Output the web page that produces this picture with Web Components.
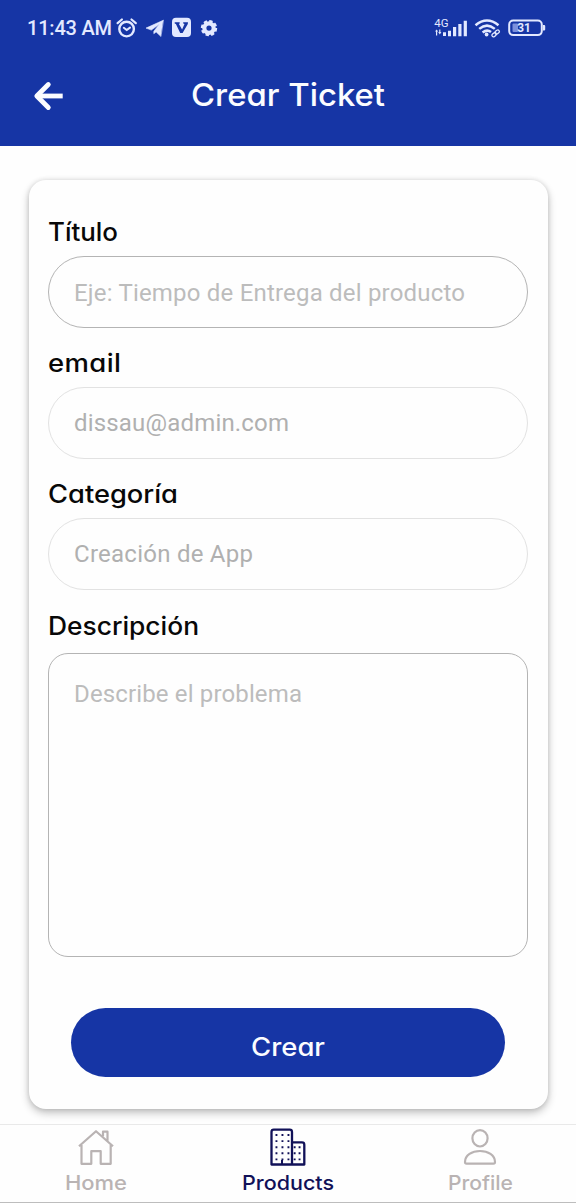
<!DOCTYPE html>
<html lang="es">
<head>
<meta charset="utf-8">
<title>Crear Ticket</title>
<style>
html,body{margin:0;height:100%;background:#fefefe;overflow:hidden}
</style>
</head>
<body>
<ticket-app></ticket-app>
<script>
const define = (name, html, ready) => customElements.define(name, class extends HTMLElement {
  constructor(){
    super();
    const t = document.createElement('template');
    t.innerHTML = html;
    this.attachShadow({mode:'open'}).append(t.content.cloneNode(true));
  }
  connectedCallback(){ if (ready) ready(this, this.shadowRoot); }
});

// Text fitted to the given advance width: "wide" text is first extended
// slightly, and tracking takes up the rest.
define('tracked-text', `<style>
:host{display:block;white-space:nowrap}
span{display:block;width:max-content;transform-origin:0 50%}
</style><span><slot></slot></span>`, (el, root) => {
  const span = root.querySelector('span');
  const n = el.textContent.length;
  const want = +el.getAttribute('width');
  const natural = span.getBoundingClientRect().width;
  const scale = el.hasAttribute('wide') ? Math.max(1, Math.min(1.1, want / natural)) : 1;
  span.style.letterSpacing = (want / scale - natural) / (n - 1) + 'px';
  if (scale > 1) span.style.transform = `scaleX(${scale})`;
  el.style.width = want + 'px';
});

define('status-bar', `<style>
:host{display:flex;height:54px;align-items:center;justify-content:space-between;padding:1px 30px 0 27px;box-sizing:border-box;color:#e3e9ff;font:500 20px/24px Roboto,sans-serif}
.l,.r{display:flex;align-items:center}
svg{display:block;flex:none}
</style>
<div class="l"><tracked-text width="85">11:43 AM</tracked-text>
<svg style="margin-left:4px" width="102" height="24" viewBox="116 15.500 102 24" fill="none" stroke="#e3e9ff" stroke-linecap="round">
<circle cx="126.600" cy="28.600" r="7.300" stroke-width="2.400"/><path d="M117.600 22.700l4.300-3.700M135.800 22.700l-4.300-3.700" stroke-width="2.200"/><path d="M123.800 27.300l2.900 2.300 3.300-2.500" stroke-width="2"/>
<path d="M163.200 19.800L146 27.600l5.300 2 8-5.800-5.500 7v2.400l2.300-1.800 4.600 4.400z" fill="#e3e9ff" stroke="#e3e9ff" stroke-width=".6" stroke-linejoin="round"/>
<rect x="172" y="17.300" width="19" height="19.200" rx="4" fill="#e3e9ff" stroke="none"/><path d="M174.700 21.700h5v1.400l-.8.500 3.200 5.300 2.400-5.300-1.300-.5v-1.400h4.800l-.2 1.800-5.200 9h-2.400l-4.300-9-1.200-.5z" fill="#1635a5" stroke="none"/>
<circle cx="209" cy="27.600" r="4.700" stroke-width="4.200"/><circle cx="209" cy="27.600" r="6.900" stroke-width="2.600" stroke-linecap="butt" stroke-dasharray="3.300 2.119"/>
</svg></div>
<div class="r"><svg width="113" height="24" viewBox="433 15.500 113 24" fill="#e3e9ff">
<text x="434.300" y="26.400" font-family="Roboto" font-size="11.500" font-weight="400" textLength="14.300" lengthAdjust="spacingAndGlyphs">4G</text>
<path d="M435 31l1.600-2 1.600 2h-1v4h-1.200v-4zM438.200 31.500h1v-2.500h1.200v2.500h1l-1.600 2.500zM443 31.800h3v3.700h-3zM448 30.200h3v5.500h-3zM453 26.500h3.200v9.300H453zM458.300 23.500h3.200v12.300h-3.200zM463.700 20.300h3.200v15.500h-3.200z"/>
<g fill="none" stroke="#e3e9ff" stroke-width="2.500"><path d="M475.500 24.700q11.500-9.400 23 0M479.200 28.400q7.800-6.600 15.600 0M482.600 32q4.400-3.500 8.400-.4"/><g stroke-width="1.300"><rect x="491.600" y="32.600" width="4.800" height="3.200" rx="1.600" transform="rotate(-38 494 34)"/><rect x="494.800" y="30.100" width="4.800" height="3.200" rx="1.600" transform="rotate(-38 497 31.700)"/></g></g><circle cx="486.600" cy="34" r="1.900"/>
<rect x="509.200" y="20" width="32.600" height="14.600" rx="4" fill="none" stroke="#e3e9ff" stroke-width="2"/><rect x="512.500" y="23" width="5.500" height="8.600" rx="1" fill="#7c90dc"/><path d="M543 24.500h1.200q1 0 1 1v3.600q0 1-1 1H543z"/>
<text x="517.300" y="31.600" font-family="Roboto" font-size="12.300" font-weight="700" textLength="13.600" lengthAdjust="spacingAndGlyphs">31</text>
</svg></div>`);

define('app-header', `<style>
:host{display:block;height:146.300px;background:#1635a5;flex:none}
.bar{display:grid;grid-template-columns:1fr auto 1fr;height:84px;align-items:center;color:#fbfcff;font:500 31.500px/40px Inter,sans-serif;font-feature-settings:"cv11"}
svg{margin-left:33px;display:block}
::slotted(*){margin-top:-2px}
</style><status-bar></status-bar>
<div class="bar"><svg width="31" height="30" viewBox="33 81 31 30" fill="none" stroke="#fbfcff" stroke-width="4.800" stroke-linecap="round" stroke-linejoin="round"><path d="M48.300 84.500L36.800 96l11.500 11.500"/><path d="M38 96h24.700" stroke-linecap="butt"/></svg><slot></slot><i></i></div>`);

define('form-field', `<style>
:host{display:block;height:131px}
.label{height:27px;color:#080808;font:500 25px/27px Inter,sans-serif;font-feature-settings:"cv11"}
.box{box-sizing:border-box;height:72px;margin-top:10px;border:1px solid #b4b4b4;border-radius:36px;padding:22px 25px;color:#bcbcbc;font:400 24px/28px Roboto,sans-serif}
:host([disabled]) .box{border-color:#e2e2e2;color:#b0b0b0;padding-top:21px}
:host([multiline]){height:355px;padding-top:1px}
:host([multiline]) .box{height:304px;border-radius:20px;padding-top:26px;margin-top:13px}
</style><div class="label"></div><div class="box"></div>`, (el, root) => {
  const put = (sel, key, wide) => {
    const t = document.createElement('tracked-text');
    t.textContent = el.getAttribute(key);
    t.setAttribute('width', el.getAttribute(key + '-width'));
    t.toggleAttribute('wide', wide);
    root.querySelector(sel).replaceChildren(t);
  };
  put('.label', 'label', true); put('.box', 'hint', false);
});

define('primary-button', `<style>
:host{display:flex;height:69.500px;border-radius:35px;background:#1635a5;align-items:center;justify-content:center;color:#fbfcff;font:500 25px/30px Inter,sans-serif;font-feature-settings:"cv11";box-sizing:border-box;padding-top:8px}
</style><slot></slot>`);

define('form-card', `<style>
:host{display:block;box-sizing:border-box;margin:34px 28.500px 0;height:929px;padding:39px 19.500px 0;background:#fefefe;border-radius:17px;box-shadow:0 4px 8px rgba(0,0,0,.24),0 0 5px rgba(0,0,0,.12)}
</style><slot></slot>`);

define('nav-item', `<style>
:host{display:flex;flex-direction:column;align-items:center;color:#b9b3b3;font:500 20px/24px Inter,sans-serif;font-feature-settings:"cv11"}
:host([active]){color:#111158}
.icon{height:45.500px}
</style><div class="icon"><slot name="icon"></slot></div><slot></slot>`);

define('tab-bar', `<style>
:host{display:grid;grid-template-columns:repeat(3,1fr);height:79px;box-sizing:border-box;background:#fefefe;border-top:1px solid #e9e9e9;border-bottom:1.500px solid #bdbdbd;flex:none}
svg{display:block}
</style>
<nav-item><svg slot="icon" width="40" height="44" viewBox="76 1125 40 44" fill="none" stroke="#b9b3b3" stroke-width="2.200" stroke-linejoin="round"><path d="M79 1146.300L96 1131.200l17 15.100M81.500 1145v18.800h9.800v-12.600h9.400v12.600h10V1145M103 1136.300v-4.600h4.500v9"/></svg><tracked-text wide width="62">Home</tracked-text></nav-item>
<nav-item active><svg slot="icon" width="40" height="44" viewBox="268 1125 40 44" fill="none" stroke="#111158" stroke-width="2.300" stroke-linejoin="round"><path d="M271.500 1164.500V1132q0-2.300 2.300-2.300h15.900q2.300 0 2.300 2.300v32.500zM292 1142.400h10q2.300 0 2.300 2.300v19.800H292"/><path d="M275.500 1135h14M275.500 1141.100h14M275.500 1147.200h14M275.500 1153.300h14M275.500 1159.400h14" stroke-width="1.900" stroke-dasharray="1.900 4.100"/><path d="M293.700 1147.200h7M293.700 1153.300h7M293.700 1159.400h7" stroke-width="1.900" stroke-dasharray="1.900 3"/><path d="M282 1160v4" stroke-width="2"/></svg><tracked-text wide width="92">Products</tracked-text></nav-item>
<nav-item><svg slot="icon" width="40" height="44" viewBox="460 1125 40 44" fill="none" stroke="#b9b3b3" stroke-width="2.200" stroke-linejoin="round"><ellipse cx="480" cy="1138.300" rx="7.600" ry="8.200"/><path d="M466.500 1163.700q-1.500 0-1.500-1.700c0-7 7-11 15-11s15 4 15 11q0 1.700-1.500 1.700z"/></svg><tracked-text wide width="65">Profile</tracked-text></nav-item>`);

define('ticket-app', `<style>
:host{display:flex;flex-direction:column;height:1203px;width:576px;overflow:hidden;background:#fefefe}
main{flex:1;min-height:0;overflow:hidden}
primary-button{margin:39.500px 23px 0}
</style>
<app-header><tracked-text wide width="194">Crear Ticket</tracked-text></app-header>
<main><form-card>
<form-field label="Título" label-width="70" hint="Eje: Tiempo de Entrega del producto" hint-width="391"></form-field>
<form-field disabled label="email" label-width="73" hint="dissau@admin.com" hint-width="215"></form-field>
<form-field disabled label="Categoría" label-width="130" hint="Creación de App" hint-width="179"></form-field>
<form-field multiline label="Descripción" label-width="151" hint="Describe el problema" hint-width="228"></form-field>
<primary-button><tracked-text wide width="74">Crear</tracked-text></primary-button>
</form-card></main>
<tab-bar></tab-bar>`);
</script>
</body>
</html>
